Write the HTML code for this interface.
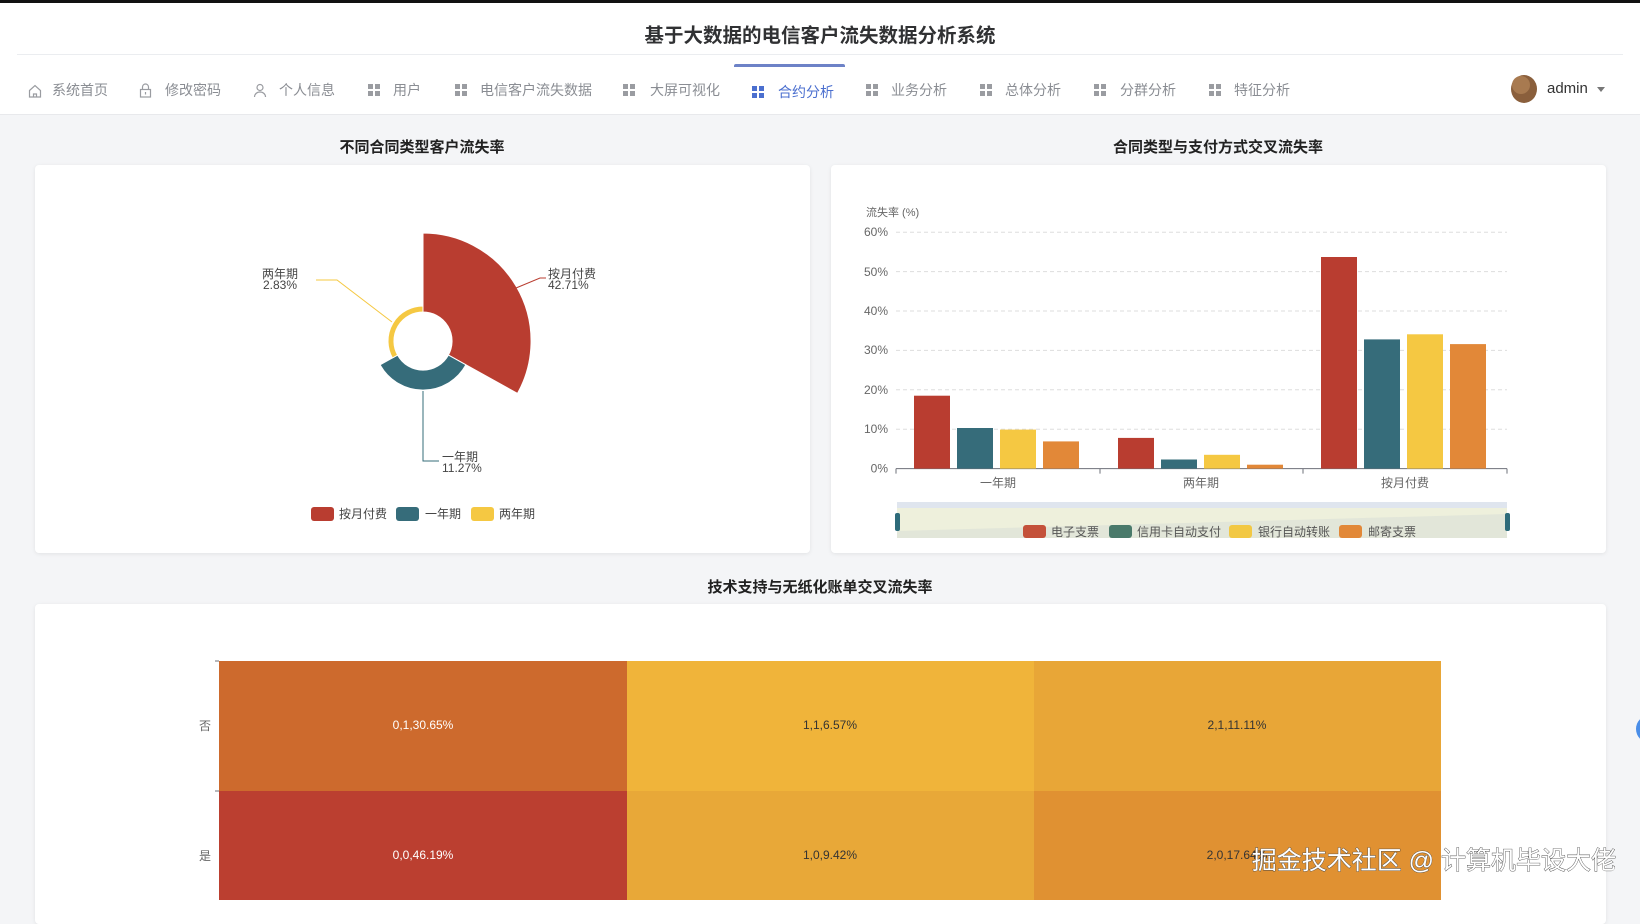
<!DOCTYPE html>
<html><head><meta charset="utf-8"><style>
*{margin:0;padding:0;box-sizing:border-box}
body{width:1640px;height:900px;overflow:hidden;background:#f4f5f7;font-family:"Liberation Sans","Noto Sans CJK SC",sans-serif;position:relative}
.topbar{position:absolute;left:0;top:0;width:1640px;height:3px;background:#111}
.header{position:absolute;left:0;top:3px;width:1640px;height:112px;background:#fff;border-bottom:1px solid #e8e9ec}
.title{position:absolute;left:0;width:1640px;top:16px;text-align:center;font-size:19.5px;font-weight:bold;color:#303133}
.divl{position:absolute;left:17px;width:1606px;top:51px;height:1px;background:#ebedf0}
.nav{position:absolute;top:80px;font-size:14px;color:#8a8d93;white-space:nowrap}
.nav.act{color:#4b6fcf;top:82px}
.card{position:absolute;background:#fff;border-radius:4px;box-shadow:0 1px 4px rgba(0,0,0,.08)}
.ct{position:absolute;font-size:15px;font-weight:bold;color:#222;text-align:center}
</style></head><body>
<div class="topbar"></div>
<div class="header">
<div class="title">基于大数据的电信客户流失数据分析系统</div>
<div class="divl"></div>
<div style="position:absolute;left:734px;top:61px;width:111px;height:3px;background:#6d82c7;border-radius:2px 2px 0 0"></div>
</div>
<svg style="position:absolute;left:28px;top:84px" width="14" height="14" viewBox="0 0 14 14" fill="none" stroke="#9a9ca1" stroke-width="1.2"><path d="M1.5 6.5 7 1.5l5.5 5V13h-11z"/><path d="M5.5 13v-3h3v3"/></svg>
<div class="nav" style="left:52px">系统首页</div>
<svg style="position:absolute;left:139px;top:83px" width="13" height="15" viewBox="0 0 13 15" fill="none" stroke="#9a9ca1" stroke-width="1.2"><rect x="1.5" y="6.5" width="10" height="7.5"/><path d="M3.5 6.5V4a3 3 0 0 1 6 0v2.5M6.5 9v2.5"/></svg>
<div class="nav" style="left:165px">修改密码</div>
<svg style="position:absolute;left:253px;top:83px" width="14" height="15" viewBox="0 0 14 15" fill="none" stroke="#9a9ca1" stroke-width="1.2"><circle cx="7" cy="4.5" r="3"/><path d="M1.5 14c0-3 2.5-5 5.5-5s5.5 2 5.5 5"/></svg>
<div class="nav" style="left:279px">个人信息</div>
<div class="nav" style="left:393px">用户</div>
<div class="nav" style="left:480px">电信客户流失数据</div>
<div class="nav" style="left:650px">大屏可视化</div>
<div class="nav act" style="left:778px">合约分析</div>
<div class="nav" style="left:891px">业务分析</div>
<div class="nav" style="left:1005px">总体分析</div>
<div class="nav" style="left:1120px">分群分析</div>
<div class="nav" style="left:1234px">特征分析</div>
<svg style="position:absolute;left:0;top:0" width="1640" height="120">
<g fill="#9a9ca1">
<g transform="translate(368,84)"><rect width="5" height="5"/><rect x="7" width="5" height="5"/><rect y="7" width="5" height="5"/><rect x="7" y="7" width="5" height="5"/></g>
<g transform="translate(455,84)"><rect width="5" height="5"/><rect x="7" width="5" height="5"/><rect y="7" width="5" height="5"/><rect x="7" y="7" width="5" height="5"/></g>
<g transform="translate(623,84)"><rect width="5" height="5"/><rect x="7" width="5" height="5"/><rect y="7" width="5" height="5"/><rect x="7" y="7" width="5" height="5"/></g>
<g transform="translate(866,84)"><rect width="5" height="5"/><rect x="7" width="5" height="5"/><rect y="7" width="5" height="5"/><rect x="7" y="7" width="5" height="5"/></g>
<g transform="translate(980,84)"><rect width="5" height="5"/><rect x="7" width="5" height="5"/><rect y="7" width="5" height="5"/><rect x="7" y="7" width="5" height="5"/></g>
<g transform="translate(1094,84)"><rect width="5" height="5"/><rect x="7" width="5" height="5"/><rect y="7" width="5" height="5"/><rect x="7" y="7" width="5" height="5"/></g>
<g transform="translate(1209,84)"><rect width="5" height="5"/><rect x="7" width="5" height="5"/><rect y="7" width="5" height="5"/><rect x="7" y="7" width="5" height="5"/></g>
</g>
<g fill="#4b6fcf" transform="translate(752,86)"><rect width="5" height="5"/><rect x="7" width="5" height="5"/><rect y="7" width="5" height="5"/><rect x="7" y="7" width="5" height="5"/></g>
<ellipse cx="1524" cy="89" rx="13" ry="14" fill="#8a5f3c"/><ellipse cx="1521" cy="85" rx="9" ry="9" fill="#a87a50"/>
<path d="M1597 87h8l-4 5z" fill="#777"/>
</svg>
<div class="nav" style="left:1547px;top:80px;color:#333;font-size:15px">admin</div>

<div class="ct" style="left:34px;width:776px;top:136px">不同合同类型客户流失率</div>
<div class="ct" style="left:830px;width:776px;top:136px">合同类型与支付方式交叉流失率</div>
<div class="card" style="left:35px;top:165px;width:775px;height:388px"></div>
<div class="card" style="left:831px;top:165px;width:775px;height:388px"></div>
<div class="ct" style="left:34px;width:1572px;top:576px">技术支持与无纸化账单交叉流失率</div>
<div class="card" style="left:35px;top:604px;width:1571px;height:320px"></div>

<svg style="position:absolute;left:0;top:0" width="1640" height="900" font-family="Liberation Sans,Noto Sans CJK SC,sans-serif">
<g stroke="#fff" stroke-width="1">
<path d="M423 233 A108 108 0 0 1 517.5 393.4 L448.4 355.1 A29 29 0 0 0 423 312 Z" fill="#b93d30"/>
<path d="M465.9 364.8 A49 49 0 0 1 380.1 364.8 L397.6 355.1 A29 29 0 0 0 448.4 355.1 Z" fill="#366c7a"/>
<path d="M392.4 358 A35 35 0 0 1 423 306 L423 312 A29 29 0 0 0 397.6 355.1 Z" fill="#f5c842"/>
</g>
<g fill="none" stroke-width="1">
<path d="M316 280H337L392 322" stroke="#f5c842"/>
<path d="M516 288L540 278H546" stroke="#b93d30"/>
<path d="M423 391V461H439" stroke="#366c7a"/>
</g>
<g font-size="12" fill="#444">
<text x="280" y="278" text-anchor="middle">两年期</text><text x="280" y="289" text-anchor="middle">2.83%</text>
<text x="548" y="278">按月付费</text><text x="548" y="289">42.71%</text>
<text x="442" y="461">一年期</text><text x="442" y="472">11.27%</text>
</g>
<g font-size="12" fill="#444">
<rect x="311" y="507" width="23" height="14" rx="3" fill="#b93d30"/><text x="339" y="518">按月付费</text>
<rect x="396" y="507" width="23" height="14" rx="3" fill="#366c7a"/><text x="425" y="518">一年期</text>
<rect x="471" y="507" width="23" height="14" rx="3" fill="#f5c842"/><text x="499" y="518">两年期</text>
</g>
<g stroke="#ddd" stroke-dasharray="4 3">
<path d="M896 429.2H1507M896 389.8H1507M896 350.4H1507M896 311H1507M896 271.6H1507M896 232.2H1507"/>
</g>
<path d="M896 468.6H1507M896 468.6v5M1100 468.6v5M1303 468.6v5M1507 468.6v5" stroke="#6e7079" fill="none"/>
<g font-size="12" fill="#666" text-anchor="end">
<text x="888" y="472.5">0%</text><text x="888" y="433">10%</text><text x="888" y="394">20%</text><text x="888" y="354">30%</text><text x="888" y="315">40%</text><text x="888" y="276">50%</text><text x="888" y="236">60%</text>
</g>
<text x="866" y="216" font-size="11" fill="#666">流失率 (%)</text>
<g font-size="12" fill="#666" text-anchor="middle"><text x="998" y="487">一年期</text><text x="1201" y="487">两年期</text><text x="1405" y="487">按月付费</text></g>
<g>
<rect x="914" y="395.7" width="36" height="72.9" fill="#b93d30"/><rect x="957" y="428" width="36" height="40.6" fill="#366c7a"/><rect x="1000" y="429.6" width="36" height="39" fill="#f5c842"/><rect x="1043" y="441.4" width="36" height="27.2" fill="#e28838"/>
<rect x="1118" y="437.9" width="36" height="30.7" fill="#b93d30"/><rect x="1161" y="459.5" width="36" height="9.1" fill="#366c7a"/><rect x="1204" y="454.8" width="36" height="13.8" fill="#f5c842"/><rect x="1247" y="464.7" width="36" height="3.9" fill="#e28838"/>
<rect x="1321" y="257" width="36" height="211.6" fill="#b93d30"/><rect x="1364" y="339.4" width="36" height="129.2" fill="#366c7a"/><rect x="1407" y="334.3" width="36" height="134.3" fill="#f5c842"/><rect x="1450" y="344.1" width="36" height="124.5" fill="#e28838"/>
</g>
<rect x="897" y="502" width="610" height="36" fill="#eef0dc"/>
<rect x="897" y="502" width="610" height="6" fill="#dfe5ee"/>
<path d="M897 531L1507 514V538H897Z" fill="#dfe3d8" opacity=".8"/>
<rect x="895" y="513" width="5" height="18" rx="2" fill="#2e6b7a"/><rect x="1505" y="513" width="5" height="18" rx="2" fill="#2e6b7a"/>
<g font-size="12" fill="#555">
<rect x="1023" y="525" width="23" height="13" rx="3" fill="#c4513a"/><text x="1051" y="536">电子支票</text>
<rect x="1109" y="525" width="23" height="13" rx="3" fill="#4a7a6b"/><text x="1137" y="536">信用卡自动支付</text>
<rect x="1229" y="525" width="23" height="13" rx="3" fill="#f2c843"/><text x="1258" y="536">银行自动转账</text>
<rect x="1339" y="525" width="23" height="13" rx="3" fill="#e28838"/><text x="1368" y="536">邮寄支票</text>
</g>
<rect x="219" y="661" width="408" height="130" fill="#cd6a2d"/>
<rect x="627" y="661" width="407" height="130" fill="#f0b43a"/>
<rect x="1034" y="661" width="407" height="130" fill="#e8a637"/>
<rect x="219" y="791" width="408" height="130" fill="#bb3f30"/>
<rect x="627" y="791" width="407" height="130" fill="#e8a838"/>
<rect x="1034" y="791" width="407" height="130" fill="#e09132"/>
<path d="M215 661H219M215 791H219" stroke="#6e7079"/>
<g font-size="12" text-anchor="middle">
<text x="423" y="729" fill="#fff">0,1,30.65%</text><text x="830" y="729" fill="#333">1,1,6.57%</text><text x="1237" y="729" fill="#333">2,1,11.11%</text>
<text x="423" y="859" fill="#fff">0,0,46.19%</text><text x="830" y="859" fill="#333">1,0,9.42%</text><text x="1237" y="859" fill="#333">2,0,17.64%</text>
</g>
<g font-size="12" fill="#666" text-anchor="end"><text x="211" y="730">否</text><text x="211" y="860">是</text></g>
<circle cx="1650" cy="729" r="14" fill="#4a8ee8"/>
<text x="1616" y="869" font-size="25" fill="#fff" text-anchor="end" stroke="#444" stroke-width=".8" paint-order="stroke">掘金技术社区 @ 计算机毕设大佬</text>
</svg>
</body></html>
